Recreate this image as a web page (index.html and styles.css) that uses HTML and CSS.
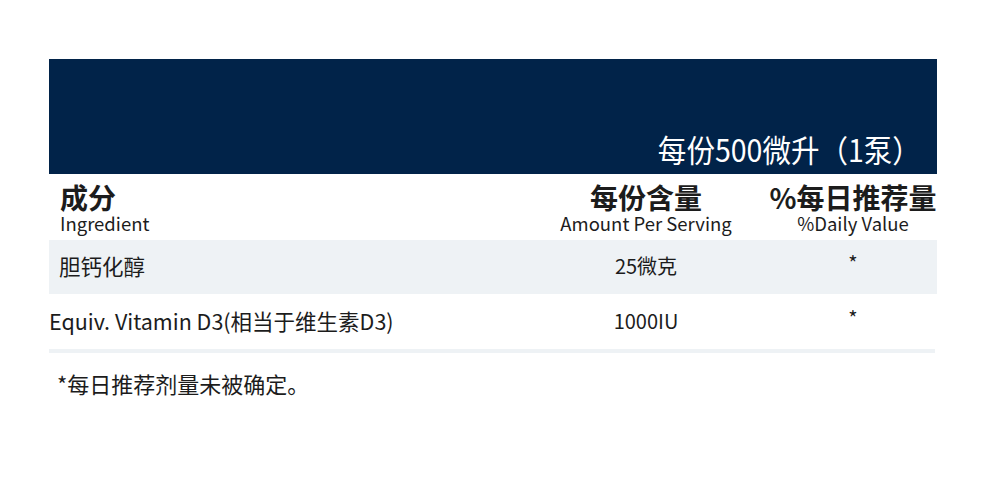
FILE: index.html
```html
<!DOCTYPE html>
<html lang="zh-CN">
<head>
<meta charset="utf-8">
<link rel="stylesheet" href="styles.css">
</head>
<body>
<div class="panel">
  <div class="banner">
    <span class="banner-text">每份500微升（1泵）</span>
  </div>
  <div class="facts">
    <div class="cell head first">
      <div class="zh">成分</div>
      <div class="en">Ingredient</div>
    </div>
    <div class="cell head mid">
      <div class="zh">每份含量</div>
      <div class="en">Amount Per Serving</div>
    </div>
    <div class="cell head last">
      <div class="zh">%每日推荐量</div>
      <div class="en">%Daily Value</div>
    </div>

    <div class="cell row shade first indent big">胆钙化醇</div>
    <div class="cell row shade mid">25微克</div>
    <div class="cell row shade last star">*</div>

    <div class="cell row first big">Equiv. Vitamin D3(相当于维生素D3)</div>
    <div class="cell row mid">1000IU</div>
    <div class="cell row last star">*</div>
  </div>
  <div class="rule"></div>
  <p class="note">*每日推荐剂量未被确定。</p>
</div>
</body>
</html>
```

FILE: styles.css
```css
html, body {
  margin: 0;
  padding: 0;
  background: #ffffff;
}

body {
  font-family: "Noto Sans CJK SC", "Noto Sans", sans-serif;
  color: #1c1c1c;
}

.panel {
  width: 888px;
  margin: 59px 0 0 49px;
}

.banner {
  height: 115px;
  background: #012349;
  display: flex;
  justify-content: flex-end;
  align-items: flex-end;
  padding-right: 16px;
  box-sizing: border-box;
}

.banner-text {
  color: #ffffff;
  font-size: 31px;
  line-height: 40px;
  margin-bottom: 5px;
  display: inline-block;
  transform: scaleX(0.92);
  transform-origin: right bottom;
  white-space: nowrap;
}

.facts {
  display: grid;
  grid-template-columns: 1fr 207px 168px;
}

.cell {
  display: flex;
  flex-direction: column;
  justify-content: center;
  white-space: nowrap;
}

.head {
  height: 66px;
  justify-content: flex-start;
  padding-top: 8px;
  box-sizing: border-box;
}

.head .zh {
  font-size: 28px;
  font-weight: 700;
  line-height: 31px;
}

.head .en {
  font-size: 18.5px;
  line-height: 21px;
}

.head.first {
  padding-left: 11px;
}

.mid {
  align-items: center;
  padding-right: 39px;
}

.last {
  align-items: center;
}

.row {
  font-size: 20px;
  line-height: 28px;
  height: 55px;
  box-sizing: border-box;
  padding-bottom: 2px;
}

.row.big {
  font-size: 21.5px;
  line-height: 30px;
}

.shade {
  background: #eef2f5;
  height: 54px;
}

.indent {
  padding-left: 10px;
}

.star {
  font-size: 20px;
  padding-bottom: 8px;
}

.rule {
  height: 4px;
  margin-right: 2px;
  background: #eef2f5;
}

.note {
  margin: 15px 0 0 8px;
  font-size: 22px;
  line-height: 30px;
}
```
